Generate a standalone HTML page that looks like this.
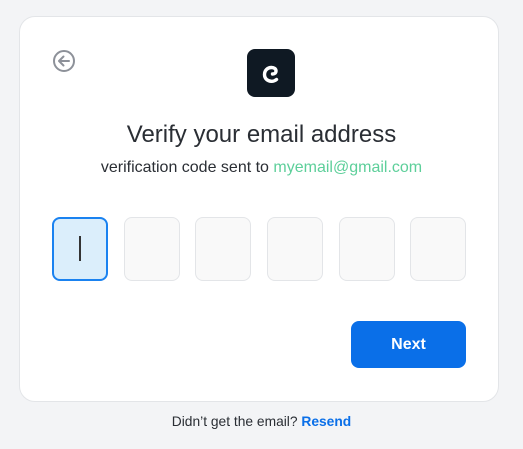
<!DOCTYPE html>
<html><head><style>
body{margin:0;width:523px;height:449px;background:#f3f4f6;font-family:"Liberation Sans",sans-serif;position:relative;overflow:hidden}
.card{position:absolute;left:19px;top:16px;width:478px;height:384px;background:#fff;border:1px solid #e3e5e8;border-radius:16px}
.logo{position:absolute;left:247px;top:49px;width:48px;height:48px;background:#0f1923;border-radius:8px}
.t{position:absolute;left:0;width:523px;text-align:center}
.box{position:absolute;top:217px;width:54px;height:62px;border:1px solid #e3e5e8;border-radius:8px;background:#f9f9f9}
.btn{position:absolute;left:351px;top:321px;width:115px;height:47px;background:#0a6fe8;border-radius:8px;color:#fff;font-weight:bold;font-size:16px;line-height:47px;text-align:center}
</style></head><body>
<div class="card"></div>
<svg style="position:absolute;left:52px;top:49px" width="24" height="24" viewBox="0 0 24 24"><circle cx="12" cy="12" r="10" fill="none" stroke="#8d9199" stroke-width="2"/><path d="M17 12H7.5M11.5 7.5L7 12l4.5 4.5" fill="none" stroke="#8d9199" stroke-width="2" stroke-linecap="round" stroke-linejoin="round"/></svg>
<div class="logo"><svg width="48" height="48" viewBox="0 0 48 48"><path d="M25.5 25c2.2 0 3.5-1.2 3.5-3 0-2.2-2-3.5-4.5-3.5-4 0-7 3-7 7s3 6.8 7 6.8c2 0 3.6-.6 5-1.8" fill="none" stroke="#fff" stroke-width="3.4" stroke-linecap="round"/></svg></div>
<div class="t" style="top:121px;font-size:24px;color:#2a2e34">Verify your email address</div>
<div class="t" style="top:159px;font-size:16px;color:#2a2e34">verification code sent to <span style="color:#5dcf9a">myemail@gmail.com</span></div>
<div class="box" style="left:52px;border:2px solid #1a82f0;width:52px;height:60px;background:#dbeefb"><div style="position:absolute;left:25px;top:17px;width:1.5px;height:25px;background:#333"></div></div>
<div class="box" style="left:124px"></div>
<div class="box" style="left:195px"></div>
<div class="box" style="left:267px"></div>
<div class="box" style="left:339px"></div>
<div class="box" style="left:410px"></div>
<div class="btn">Next</div>
<div class="t" style="top:414px;font-size:13.8px;color:#2a2e34">Didn’t get the email? <b style="color:#0a6fe8">Resend</b></div>
</body></html>
